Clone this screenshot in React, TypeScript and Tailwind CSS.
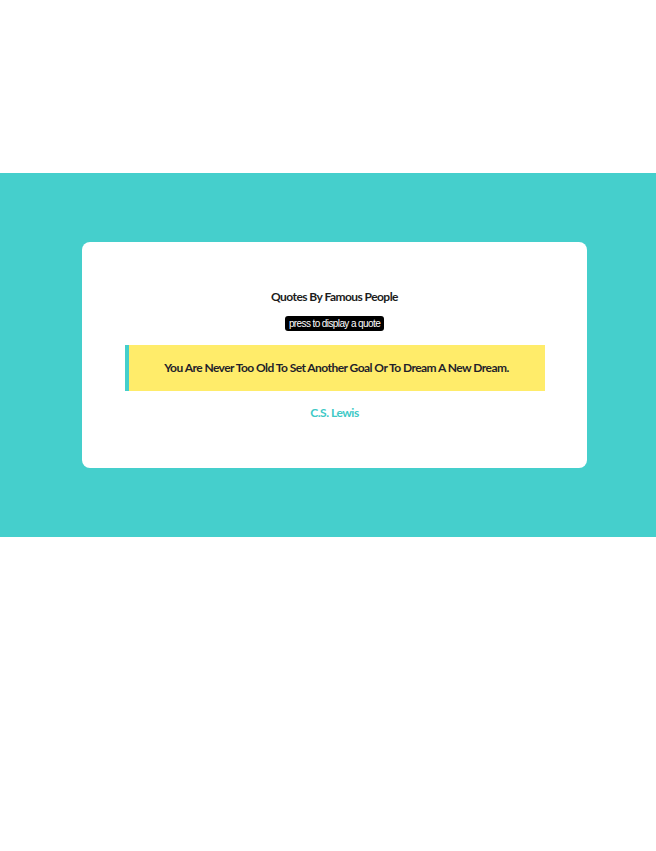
export default function App() {
  return (
    <div className="min-h-[851px] bg-white font-['Lato','Open_Sans',sans-serif]">
      <div className="h-[173px]" />
      <section className="bg-[#45cfcc] pt-[69px] pb-[69px] pl-[82px] pr-[69px]">
        <div className="flex h-[226px] flex-col items-center rounded-lg bg-white pt-[47px]">
          <h1 className="text-[12px] leading-[16px] font-bold tracking-[-0.55px] text-[#1c1c1c]">Quotes By Famous People</h1>
          <button className="mt-[11px] h-[15px] rounded-[3px] bg-black px-[4px] font-['Liberation_Sans',Arial,sans-serif] text-[10px] leading-[15px] tracking-[-0.6px] text-white">
            press to display a quote
          </button>
          <div className="mt-[14px] flex h-[46px] w-[420px] items-center justify-center border-l-4 border-[#45cfcc] bg-[#ffec6a]">
            <p className="text-[12px] font-bold tracking-[-0.55px] text-[#1f1f2a]">
              You Are Never Too Old To Set Another Goal Or To Dream A New Dream.
            </p>
          </div>
          <p className="mt-[14px] text-[12px] leading-[16px] font-bold tracking-[-0.5px] text-[#3ec9c6]">C.S. Lewis</p>
        </div>
      </section>
    </div>
  )
}
